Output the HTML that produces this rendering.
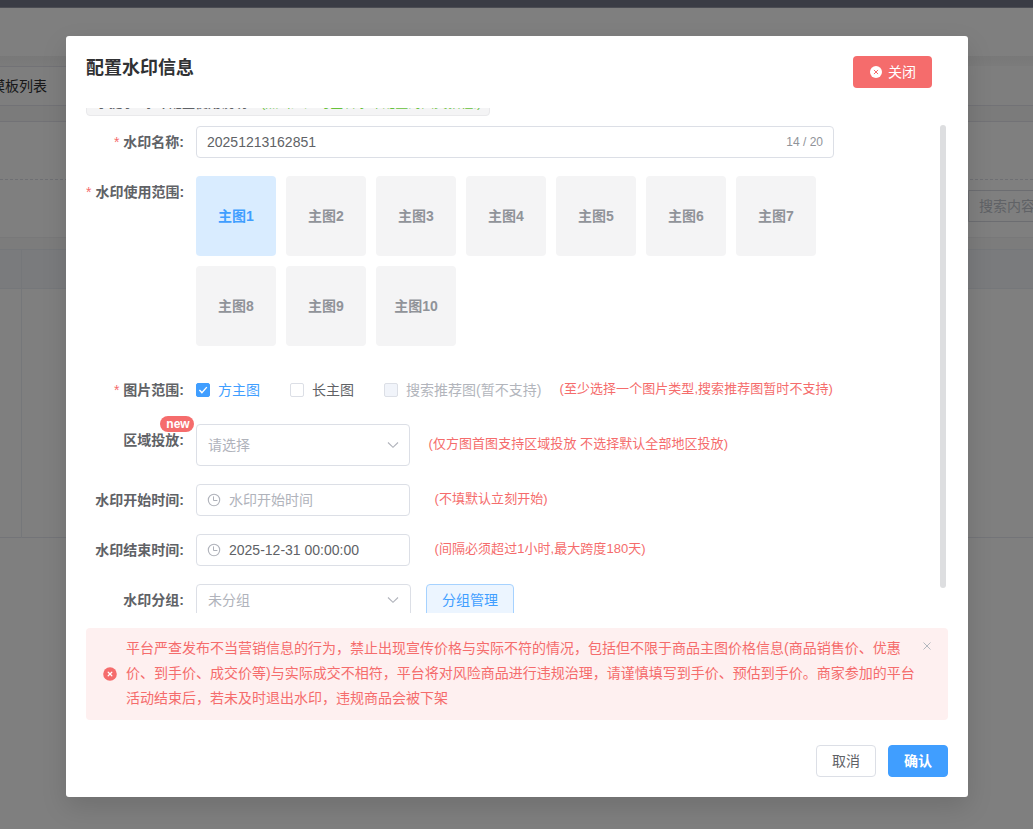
<!DOCTYPE html>
<html lang="zh-CN">
<head>
<meta charset="utf-8">
<title>配置水印信息</title>
<style>
*{box-sizing:border-box;margin:0;padding:0}
html,body{width:1033px;height:829px;overflow:hidden}
body{font-family:"Liberation Sans","Noto Sans CJK SC",sans-serif;font-size:14px;color:#606266;background:#f0f2f5;position:relative}
.abs{position:absolute}
/* background page */
#bg{position:absolute;left:0;top:0;width:1033px;height:829px;background:#fff;overflow:hidden}
#bg .hshadow{left:0;top:56px;width:1033px;height:10px;background:linear-gradient(#f1f1f1,#f7f7f7)}
#bg .tabs{left:0;top:66px;width:1033px;height:40px;background:#fcfcfc;border-bottom:1px solid #e4e4ec}
#bg .tabtop{left:0;top:66px;width:500px;height:1px;background:#e4e4ec}
#bg .tabs span{position:absolute;left:-9px;top:0;line-height:40px;font-size:14px;color:#303133}
#bg .gap1{left:0;top:106px;width:1033px;height:15px;background:#f7f7f7}
#bg .panel{left:0;top:121px;width:1033px;height:117px;background:#fff;border-top:1px solid #e4e4ec;border-bottom:1px solid #f0f0f3}
#bg .dash{left:0;top:179px;width:1033px;height:0;border-top:1px dashed #dcdfe6}
#bg .search{left:968px;top:190px;width:120px;height:32px;border:1px solid #d8dbe2;border-radius:1px;background:#fff;color:#c0c4cc;font-size:14px;line-height:30px;padding-left:10px;white-space:nowrap}
#bg .gap2{left:0;top:238px;width:1033px;height:11px;background:#f9f9f9}
#bg .thead{left:0;top:249px;width:1033px;height:40px;background:#f5f7fa;border-top:1px solid #ebeef5;border-bottom:1px solid #ebeef5}
#bg .tbody{left:0;top:289px;width:1033px;height:249px;background:#fff;border-bottom:1px solid #e6e9f0}
#bg .vline{left:21px;top:249px;width:1px;height:289px;background:#ebeef5}
#topbar{position:absolute;left:0;top:0;width:1033px;height:8px;background:linear-gradient(#3a3c45 0,#3a3c45 7px,#5b5c61 8px)}
#mask{position:absolute;left:0;top:0;width:1033px;height:829px;background:rgba(0,0,0,.5)}
/* modal */
#modal{position:absolute;left:66px;top:36px;width:902px;height:761px;background:#fff;border-radius:3px;box-shadow:0 10px 26px rgba(0,0,0,.13)}
#title{left:20px;top:19px;font-size:18px;line-height:26px;font-weight:bold;color:#303133;white-space:nowrap}
#closebtn{left:787px;top:20px;width:79px;height:32px;background:#f56c6c;border-radius:4px;color:#fff;font-size:14px;line-height:32px;white-space:nowrap}
#closebtn svg{position:absolute;left:17px;top:10px}
#closebtn span{position:absolute;left:35px;top:0}
#scroll{left:20px;top:72px;width:862px;height:505px;overflow:hidden}
#inner{position:absolute;left:0;top:-11px;width:862px}
.lbl{position:absolute;width:98px;left:0;text-align:right;font-weight:bold;color:#606266;font-size:14px;line-height:20px;white-space:nowrap}
.lbl i{font-style:normal;color:#f56c6c;margin-right:4px;font-weight:normal}
.inp{position:absolute;border:1px solid #dcdfe6;border-radius:4px;background:#fff}
.tile{position:absolute;width:80px;height:80px;border-radius:4px;background:#f4f4f5;color:#909399;font-weight:bold;font-size:14px;line-height:80px;text-align:center}
.tile.on{background:#d9ecff;color:#409eff}
.hint{position:absolute;color:#f56c6c;font-size:13px;line-height:20px;white-space:nowrap;letter-spacing:.05px;margin-left:1.5px}
.cb{position:absolute;width:14px;height:14px;border:1px solid #dcdfe6;border-radius:2px;background:#fff}
.cbl{position:absolute;font-size:14px;line-height:20px;white-space:nowrap}
.ph{color:#b0b3bb}
#track{left:874px;top:89px;width:6px;height:463px;border-radius:3px;background:#dddee0}
#alert{left:20px;top:592px;width:862px;height:92px;background:#fef0f0;border-radius:4px;color:#f56c6c}
#alert p{position:absolute;left:40px;top:8px;width:800px;font-size:14px;line-height:25px}
.btn{position:absolute;height:32px;border-radius:4px;font-size:14px;line-height:30px;text-align:center;border:1px solid #dcdfe6;background:#fff;color:#606266}
</style>
</head>
<body>
<div id="bg">
  <div class="abs hshadow"></div>
  <div class="abs gap1"></div>
  <div class="abs gap2"></div>
  <div class="abs tabs"><span>模板列表</span></div>
  <div class="abs tabtop"></div>
  <div class="abs panel"></div>
  <div class="abs dash"></div>
  <div class="abs search">搜索内容</div>
  <div class="abs thead"></div>
  <div class="abs tbody"></div>
  <div class="abs vline"></div>
</div>
<div id="mask"></div>
<div id="topbar"></div>
<div id="modal">
  <div id="title" class="abs">配置水印信息</div>
  <div id="closebtn" class="abs">
    <svg width="12" height="12" viewBox="0 0 12 12"><circle cx="6" cy="6" r="6" fill="#fff"/><path d="M4.2 4.2L7.8 7.8M7.8 4.2L4.2 7.8" stroke="#f56c6c" stroke-width="1" stroke-linecap="round"/></svg>
    <span>关闭</span>
  </div>
  <div id="scroll" class="abs">
    <div id="inner">
      <!-- clipped tip -->
      <div class="abs" style="left:0;top:-13px;width:404px;height:32px;background:#f4f4f5;border:1px solid #e9e9eb;border-radius:4px;font-size:13px;line-height:35px;padding-left:9px;white-space:nowrap;overflow:hidden"><b style="color:#606266">小提示: 水印配置使用说明</b><span style="color:#67c23a;margin-left:14px">(点击此处可查看水印配置的图文教程,)</span></div>

      <div class="lbl" style="top:35px"><i>*</i>水印名称:</div>
      <div class="inp" style="left:110px;top:29px;width:638px;height:32px"></div>
      <div class="abs" style="left:121px;top:35px;font-size:14px;line-height:20px;color:#606266">20251213162851</div>
      <div class="abs" style="left:640px;top:35px;width:97px;text-align:right;font-size:12px;line-height:20px;color:#909399">14 / 20</div>

      <div class="lbl" style="top:85px"><i>*</i>水印使用范围:</div>
      <div class="tile on" style="left:110px;top:79px">主图1</div>
      <div class="tile" style="left:200px;top:79px">主图2</div>
      <div class="tile" style="left:290px;top:79px">主图3</div>
      <div class="tile" style="left:380px;top:79px">主图4</div>
      <div class="tile" style="left:470px;top:79px">主图5</div>
      <div class="tile" style="left:560px;top:79px">主图6</div>
      <div class="tile" style="left:650px;top:79px">主图7</div>
      <div class="tile" style="left:110px;top:169px">主图8</div>
      <div class="tile" style="left:200px;top:169px">主图9</div>
      <div class="tile" style="left:290px;top:169px">主图10</div>

      <div class="lbl" style="top:283px"><i>*</i>图片范围:</div>
      <div class="cb" style="left:110px;top:286px;background:#409eff;border-color:#409eff"><svg width="12" height="12" viewBox="0 0 12 12" style="position:absolute;left:0;top:0"><path d="M2.4 6L4.9 8.6L9.8 3.1" fill="none" stroke="#fff" stroke-width="1.4"/></svg></div>
      <div class="cbl" style="left:132px;top:283px;color:#409eff">方主图</div>
      <div class="cb" style="left:204px;top:286px"></div>
      <div class="cbl" style="left:226px;top:283px;color:#606266">长主图</div>
      <div class="cb" style="left:298px;top:286px;background:#f1f4fa"></div>
      <div class="cbl" style="left:320px;top:283px;color:#b2b5bc">搜索推荐图(暂不支持)</div>
      <div class="hint" style="left:472px;top:282px">(至少选择一个图片类型,搜索推荐图暂时不支持)</div>

      <div class="lbl" style="top:333px">区域投放:</div>
      <div class="abs" style="left:74px;top:319px;width:34px;height:16px;border-radius:8px;background:#f56c6c;color:#fff;font-size:12px;line-height:16px;text-align:center;font-weight:bold;padding-left:2px">new</div>
      <div class="inp" style="left:110px;top:327px;width:214px;height:42px"></div>
      <div class="abs ph" style="left:122px;top:338px;font-size:14px;line-height:20px">请选择</div>
      <svg class="abs" style="left:301px;top:344px" width="12" height="8" viewBox="0 0 12 8"><path d="M1 1.5L6 6.3L11 1.5" fill="none" stroke="#b0b3bb" stroke-width="1.1"/></svg>
      <div class="hint" style="left:341px;top:337px">(仅方图首图支持区域投放 不选择默认全部地区投放)</div>

      <div class="lbl" style="top:393px">水印开始时间:</div>
      <div class="inp" style="left:110px;top:387px;width:214px;height:32px"></div>
      <svg class="abs" style="left:121px;top:396px" width="14" height="14" viewBox="0 0 14 14"><circle cx="7" cy="7" r="5.7" fill="none" stroke="#b0b3bb" stroke-width="1.1"/><path d="M6.5 3.4V7.5H10.4" fill="none" stroke="#aeb1b9" stroke-width="1"/></svg>
      <div class="abs ph" style="left:143px;top:393px;font-size:14px;line-height:20px">水印开始时间</div>
      <div class="hint" style="left:347px;top:392px">(不填默认立刻开始)</div>

      <div class="lbl" style="top:443px">水印结束时间:</div>
      <div class="inp" style="left:110px;top:437px;width:214px;height:32px"></div>
      <svg class="abs" style="left:121px;top:446px" width="14" height="14" viewBox="0 0 14 14"><circle cx="7" cy="7" r="5.7" fill="none" stroke="#b0b3bb" stroke-width="1.1"/><path d="M6.5 3.4V7.5H10.4" fill="none" stroke="#aeb1b9" stroke-width="1"/></svg>
      <div class="abs" style="left:143px;top:443px;font-size:14px;line-height:20px;color:#606266">2025-12-31 00:00:00</div>
      <div class="hint" style="left:347px;top:442px">(间隔必须超过1小时,最大跨度180天)</div>

      <div class="lbl" style="top:493px">水印分组:</div>
      <div class="inp" style="left:110px;top:487px;width:215px;height:40px"></div>
      <div class="abs ph" style="left:122px;top:493px;font-size:14px;line-height:20px">未分组</div>
      <svg class="abs" style="left:301px;top:499px" width="12" height="8" viewBox="0 0 12 8"><path d="M1 1.5L6 6.3L11 1.5" fill="none" stroke="#b0b3bb" stroke-width="1.1"/></svg>
      <div class="abs" style="left:340px;top:487px;width:88px;height:34px;border:1px solid #a6d2ff;background:#ecf5ff;border-radius:4px;color:#409eff;font-size:14px;line-height:30px;text-align:center">分组管理</div>
    </div>
  </div>
  <div id="track" class="abs"></div>
  <div id="alert" class="abs">
    <svg class="abs" style="left:17px;top:39px" width="14" height="14" viewBox="0 0 14 14"><circle cx="7" cy="7" r="6.8" fill="#f56c6c"/><path d="M5.2 5.2L8.8 8.8M8.8 5.2L5.2 8.8" stroke="#fff" stroke-width="1.25" stroke-linecap="round"/></svg>
    <p>平台严查发布不当营销信息的行为，禁止出现宣传价格与实际不符的情况，包括但不限于商品主图价格信息(商品销售价、优惠价、到手价、成交价等)与实际成交不相符，平台将对风险商品进行违规治理，请谨慎填写到手价、预估到手价。商家参加的平台活动结束后，若未及时退出水印，违规商品会被下架</p>
    <svg class="abs" style="left:837px;top:14px" width="8" height="8" viewBox="0 0 8 8"><path d="M0.5 0.5L7.5 7.5M7.5 0.5L0.5 7.5" stroke="#b4b8bf" stroke-width="1"/></svg>
  </div>
  <div class="btn" style="left:750px;top:709px;width:60px">取消</div>
  <div class="btn" style="left:822px;top:709px;width:60px;background:#409eff;border-color:#409eff;color:#fff;font-weight:bold">确认</div>
</div>
</body>
</html>
